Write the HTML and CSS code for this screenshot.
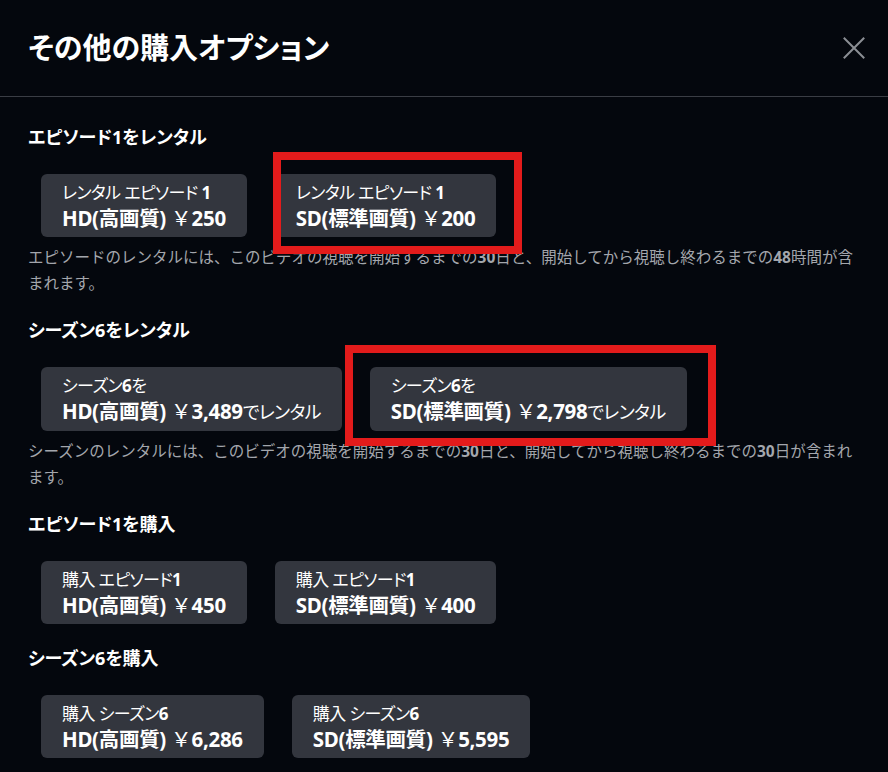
FILE: index.html
```html
<!DOCTYPE html>
<html lang="ja">
<head>
<meta charset="utf-8">
<title>その他の購入オプション</title>
<link rel="stylesheet" href="styles.css">
</head>
<body>
<div class="modal">
  <header class="modal-header">
    <h1 class="modal-title">その他の購入オプション</h1>
    <button class="close-btn" aria-label="閉じる">
      <svg viewBox="0 0 22 22" width="22" height="22"><path d="M1.5 1.5 L20.5 20.5 M20.5 1.5 L1.5 20.5" stroke="#8b8e94" stroke-width="2" fill="none" stroke-linecap="square"/></svg>
    </button>
  </header>
  <div class="modal-body">
    <section class="group">
      <h2 class="group-title">エピソード1をレンタル</h2>
      <div class="option-list">
        <button class="option"><span class="line">レンタル エピソード <b>1</b></span><span class="line strong">HD(高画質) <span class="yen">￥</span>250</span></button>
        <button class="option"><span class="line">レンタル エピソード <b>1</b></span><span class="line strong">SD(標準画質) <span class="yen">￥</span>200</span><span class="highlight hl-a"></span></button>
      </div>
      <p class="note">エピソードのレンタルには、このビデオの視聴を開始するまでの<b>30</b>日と、開始してから視聴し終わるまでの<b>48</b>時間が含まれます。</p>
    </section>
    <section class="group">
      <h2 class="group-title">シーズン6をレンタル</h2>
      <div class="option-list">
        <button class="option"><span class="line">シーズン<b>6</b>を</span><span class="line strong">HD(高画質) <span class="yen">￥</span>3,489<span class="light">でレンタル</span></span></button>
        <button class="option"><span class="line">シーズン<b>6</b>を</span><span class="line strong">SD(標準画質) <span class="yen">￥</span>2,798<span class="light">でレンタル</span></span><span class="highlight hl-b"></span></button>
      </div>
      <p class="note">シーズンのレンタルには、このビデオの視聴を開始するまでの<b>30</b>日と、開始してから視聴し終わるまでの<b>30</b>日が含まれます。</p>
    </section>
    <section class="group">
      <h2 class="group-title">エピソード1を購入</h2>
      <div class="option-list">
        <button class="option"><span class="line">購入 エピソード<b>1</b></span><span class="line strong">HD(高画質) <span class="yen">￥</span>450</span></button>
        <button class="option"><span class="line">購入 エピソード<b>1</b></span><span class="line strong">SD(標準画質) <span class="yen">￥</span>400</span></button>
      </div>
    </section>
    <section class="group">
      <h2 class="group-title">シーズン6を購入</h2>
      <div class="option-list">
        <button class="option"><span class="line">購入 シーズン<b>6</b></span><span class="line strong">HD(高画質) <span class="yen">￥</span>6,286</span></button>
        <button class="option"><span class="line">購入 シーズン<b>6</b></span><span class="line strong">SD(標準画質) <span class="yen">￥</span>5,595</span></button>
      </div>
    </section>
  </div>
</div>
</body>
</html>
```
FILE: styles.css
```css
html, body {
  margin: 0;
  padding: 0;
  background: #04070d;
}
body {
  font-family: "Noto Sans", "Noto Sans CJK JP", sans-serif;
  color: #ffffff;
}
.modal {
  width: 888px;
  height: 772px;
  overflow: hidden;
}
.modal-header {
  display: flex;
  align-items: center;
  justify-content: space-between;
  padding: 28px 23px 28px 28px;
  border-bottom: 1px solid #3a3d44;
}
.modal-title {
  margin: 0;
  font-size: 29px;
  line-height: 40px;
  font-weight: 700;
  font-feature-settings: "palt";
}
.close-btn {
  background: none;
  border: 0;
  padding: 0;
  width: 22px;
  height: 22px;
  display: flex;
}
.modal-body {
  padding: 28px 28px 0 28px;
}
.group + .group {
  margin-top: 22px;
}
.group-title {
  margin: 0 0 25px 0;
  font-size: 18px;
  line-height: 24px;
  font-weight: 700;
  font-feature-settings: "palt";
}
.option-list {
  display: flex;
  gap: 28px;
  padding-left: 13px;
}
.option {
  position: relative;
  display: flex;
  flex-direction: column;
  align-items: flex-start;
  padding: 7px 21px;
  background: #33363e;
  border: 0;
  border-radius: 6px;
  color: #ffffff;
  font-family: inherit;
  font-size: 17px;
  line-height: 24px;
  text-align: left;
  font-feature-settings: "palt";
}
.line {
  white-space: nowrap;
  letter-spacing: -0.6px;
}
.strong {
  font-weight: 700;
  font-size: 20.5px;
  letter-spacing: -0.3px;
}
.yen {
  font-family: "Noto Sans CJK JP", sans-serif;
  font-feature-settings: normal;
  font-weight: 400;
  letter-spacing: 0;
}
.light {
  font-weight: 400;
  font-size: 18px;
  letter-spacing: -0.6px;
}
.note {
  margin: 7px 0 0 0;
  font-size: 15.5px;
  line-height: 26px;
  color: #a3a6ac;
}
.note b {
  font-weight: 700;
}
.highlight {
  position: absolute;
  border: 8px solid #e31b1b;
  pointer-events: none;
}
.hl-a {
  left: -2px;
  top: -22px;
  right: -26px;
  bottom: -17px;
}
.hl-b {
  left: -25px;
  top: -22px;
  right: -29px;
  bottom: -15px;
}
```
